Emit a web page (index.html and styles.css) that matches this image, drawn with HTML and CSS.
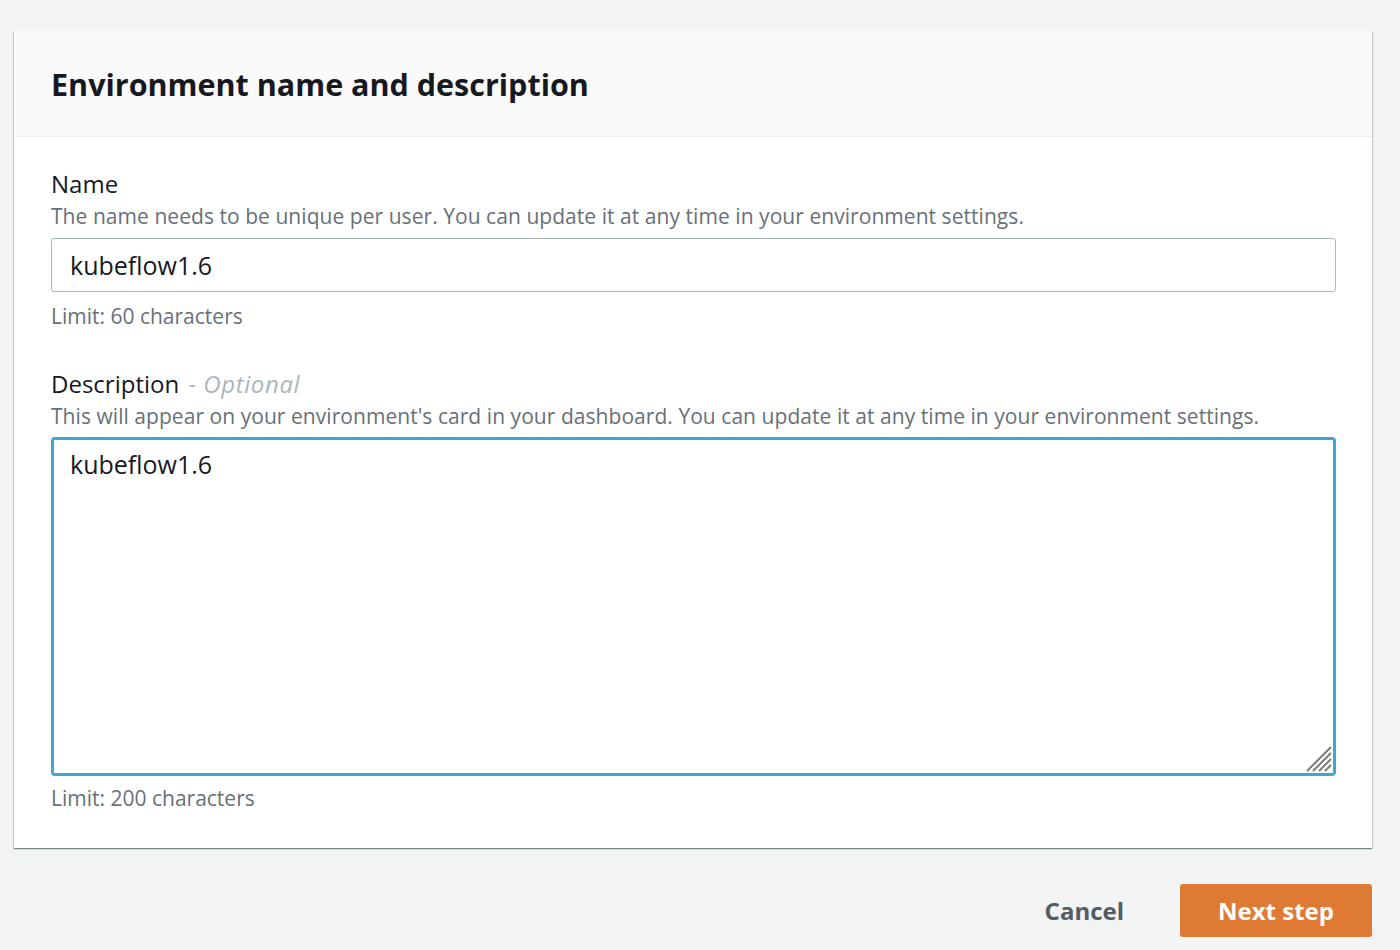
FILE: index.html
```html
<!DOCTYPE html>
<html lang="en">
<head>
<meta charset="utf-8">
<title>Environment name and description</title>
<link rel="stylesheet" href="styles.css">
</head>
<body>
<main class="page">
  <section class="card">
    <header class="card-header">
      <h2 class="card-title">Environment name and description</h2>
    </header>
    <div class="card-body">
      <div class="field">
        <label class="field-label" for="env-name">Name</label>
        <div class="field-desc">The name needs to be unique per user. You can update it at any time in your environment settings.</div>
        <input id="env-name" class="text-input" type="text" value="kubeflow1.6">
        <div class="field-hint">Limit: 60 characters</div>
      </div>
      <div class="field field-second">
        <label class="field-label" for="env-desc">Description <span class="optional">- Optional</span></label>
        <div class="field-desc">This will appear on your environment's card in your dashboard. You can update it at any time in your environment settings.</div>
        <div class="area-wrap">
          <textarea id="env-desc" class="text-area">kubeflow1.6</textarea>
          <svg class="grip" width="28" height="28" viewBox="0 0 28 28" aria-hidden="true">
            <g stroke="#7a7a7a" stroke-width="2" stroke-linecap="butt">
              <line x1="2" y1="26" x2="26" y2="2"/>
              <line x1="8" y1="26" x2="26" y2="8"/>
              <line x1="14" y1="26" x2="26" y2="14"/>
              <line x1="20" y1="26" x2="26" y2="20"/>
            </g>
          </svg>
        </div>
        <div class="field-hint">Limit: 200 characters</div>
      </div>
    </div>
  </section>
  <div class="actions">
    <button class="btn-link" type="button">Cancel</button>
    <button class="btn-primary" type="button">Next step</button>
  </div>
</main>
</body>
</html>
```

FILE: styles.css
```css
html, body {
  margin: 0;
  padding: 0;
  background: #f2f3f3;
}
body {
  font-family: "Open Sans", "Noto Sans", sans-serif;
  color: #16191f;
}
.page {
  padding: 31px 28px 0 14px;
}
.card {
  background: #ffffff;
  box-shadow: 0 1px 1px 0 rgba(0, 28, 36, 0.3), 1px 1px 1px 0 rgba(0, 28, 36, 0.15), -1px 1px 1px 0 rgba(0, 28, 36, 0.15);
}
.card-header {
  background: #fafafa;
  border-bottom: 1px solid #eaeded;
  height: 105px;
  display: flex;
  align-items: center;
  padding: 0 37px;
}
.card-title {
  margin: 0;
  font-size: 30.5px;
  font-weight: 700;
  color: #16191f;
}
.card-body {
  padding: 31px 36px 35px 37px;
}
.field {
  display: flex;
  flex-direction: column;
}
.field-second {
  margin-top: 37px;
}
.field-label {
  font-size: 24px;
  line-height: 32px;
  color: #16191f;
}
.optional {
  font-style: italic;
  color: #aab7b8;
  margin-left: 3px;
  letter-spacing: 0.6px;
}
.field-desc {
  font-size: 21px;
  line-height: 32px;
  color: #687078;
  letter-spacing: 0.05px;
}
.text-input {
  margin-top: 6px;
  box-sizing: border-box;
  height: 54px;
  width: 100%;
  border: 1px solid #aab7b8;
  border-radius: 3px;
  padding: 0 18px;
  font-family: inherit;
  font-size: 25px;
  color: #16191f;
  background: #fff;
  outline: none;
}
.area-wrap {
  position: relative;
  margin-top: 5px;
  display: flex;
}
.text-area {
  box-sizing: border-box;
  height: 339px;
  width: 100%;
  border: 3px solid #44a3cf;
  border-radius: 4px;
  padding: 6px 16px;
  font-family: inherit;
  font-size: 25px;
  line-height: 36px;
  color: #16191f;
  background: #fff;
  outline: none;
  resize: none;
}
.grip {
  position: absolute;
  right: 3px;
  bottom: 3px;
}
.field-hint {
  margin-top: 7px;
  font-size: 21px;
  line-height: 30px;
  color: #687078;
}
.field:first-child .field-hint {
  margin-top: 9px;
}
.actions {
  display: flex;
  justify-content: flex-end;
  align-items: center;
  gap: 36px;
  margin-top: 36px;
}
.btn-link {
  background: none;
  border: none;
  font-family: inherit;
  font-size: 24px;
  font-weight: 700;
  color: #545b64;
  padding: 0 20px;
  height: 53px;
}
.btn-primary {
  background: #df7a35;
  border: none;
  border-radius: 3px;
  width: 192px;
  height: 53px;
  font-family: inherit;
  font-size: 24px;
  font-weight: 700;
  color: #ffffff;
}
```
